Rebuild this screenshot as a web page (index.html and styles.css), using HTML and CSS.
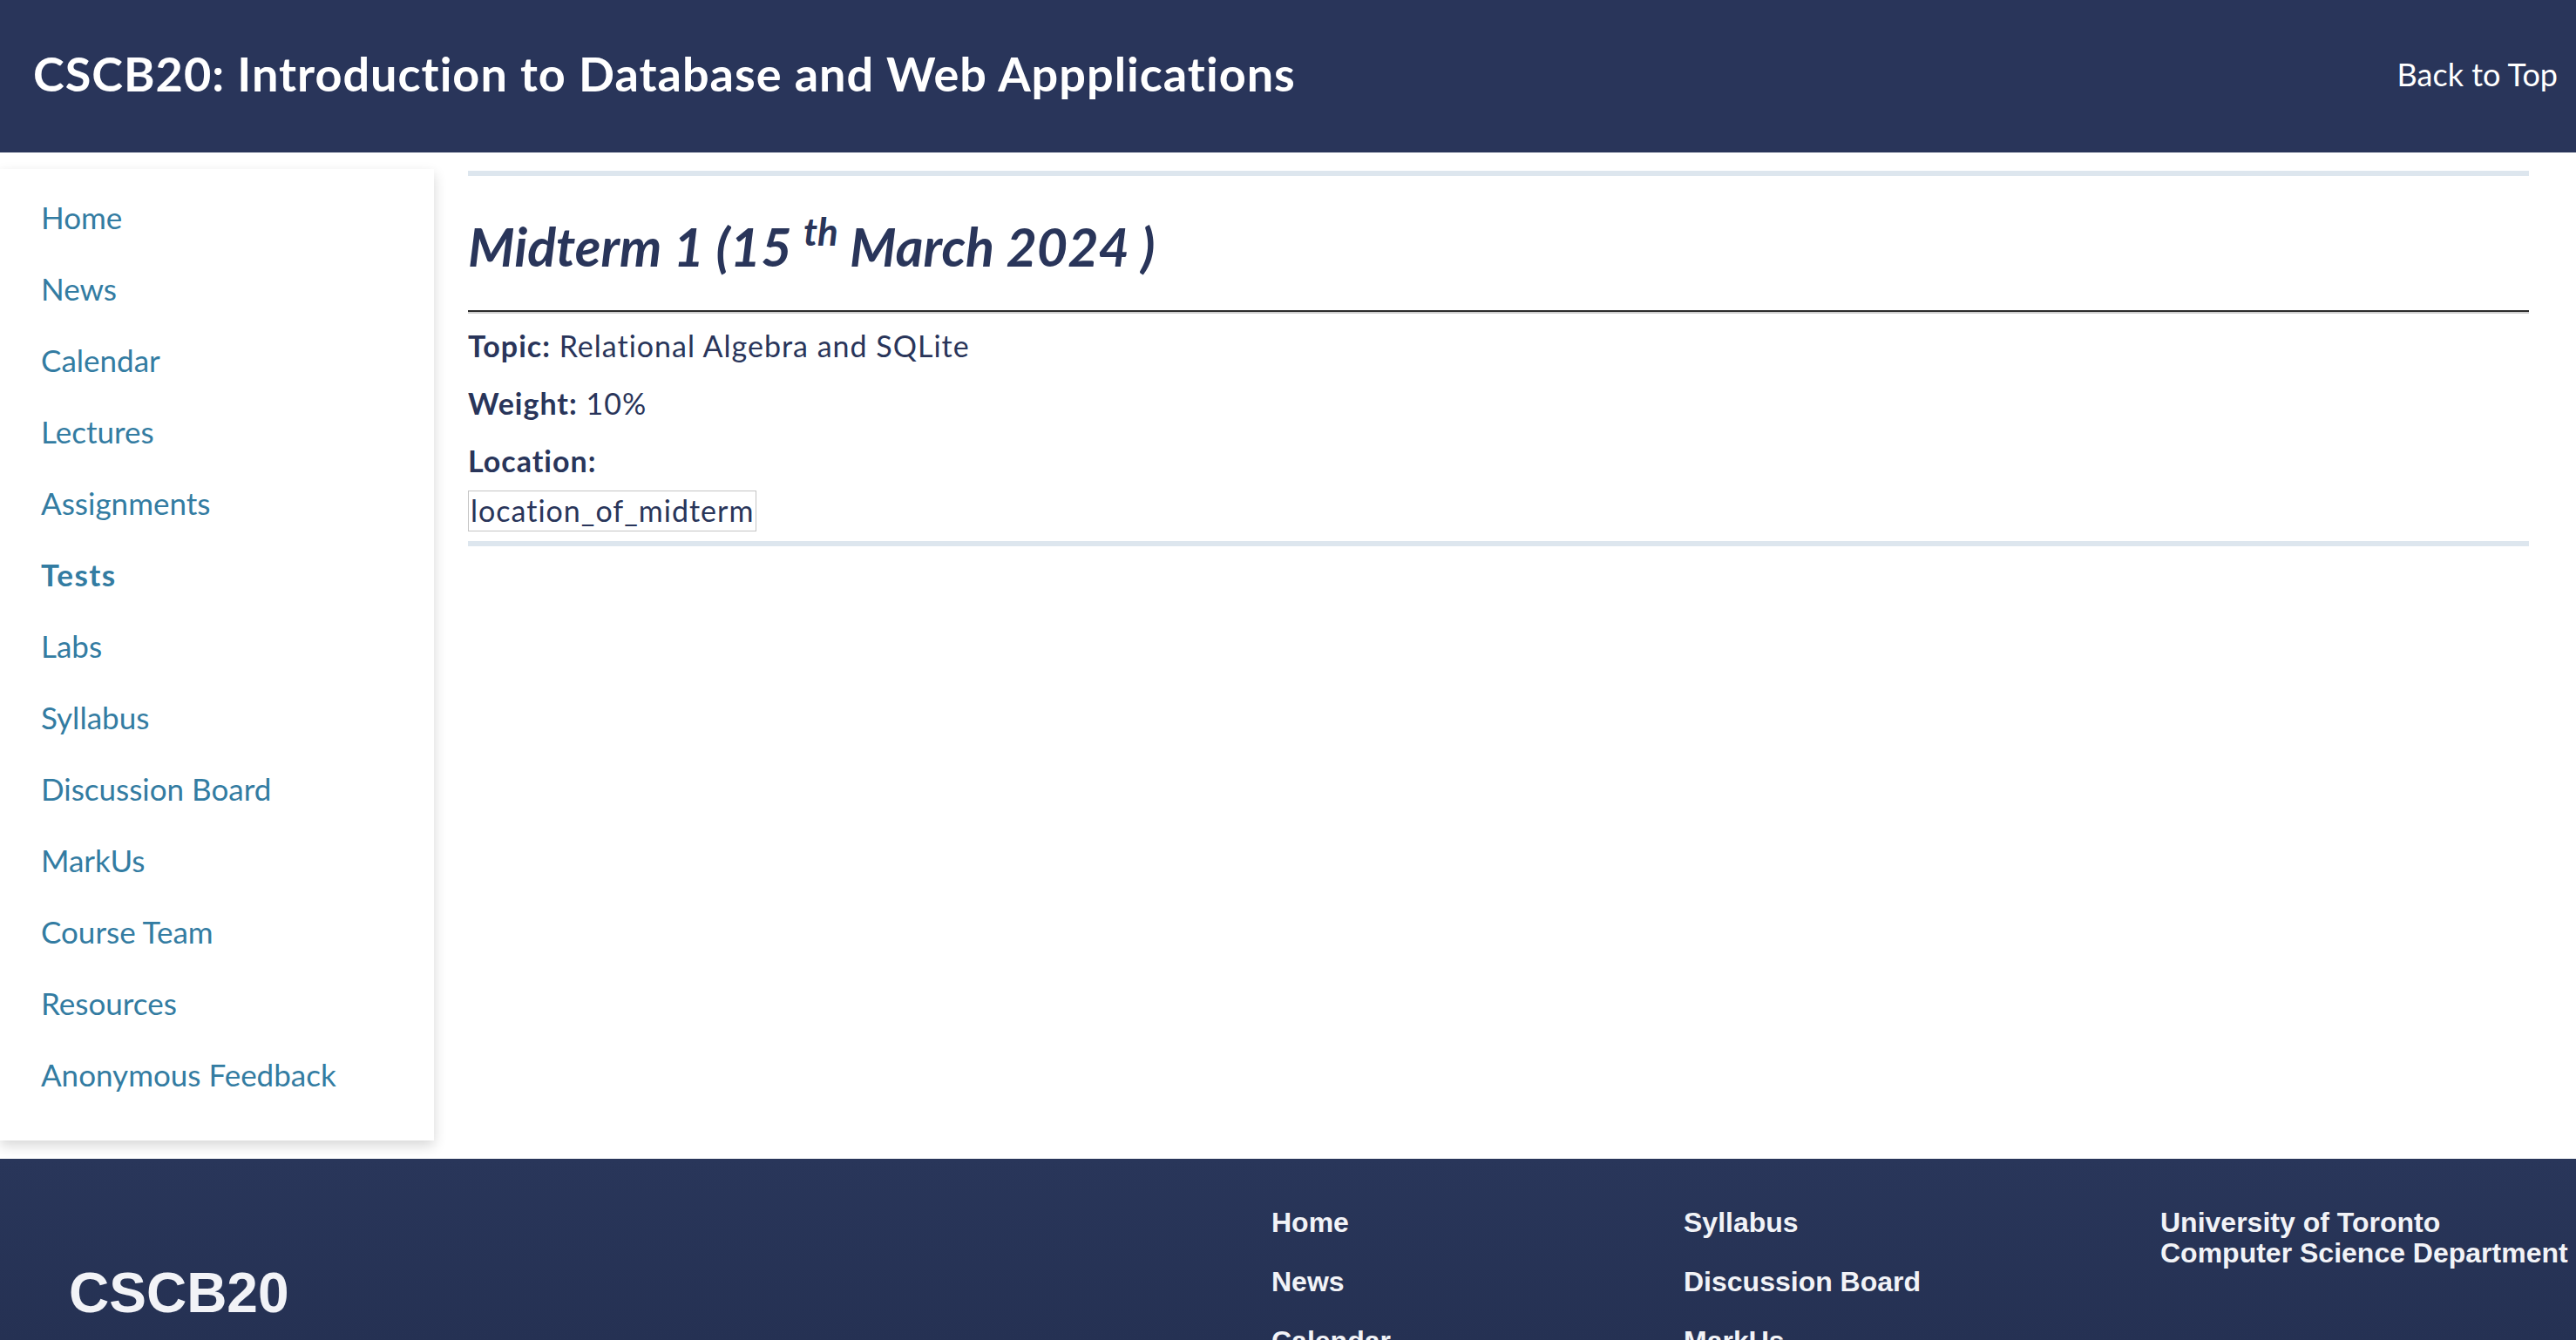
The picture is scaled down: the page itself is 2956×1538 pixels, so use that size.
FILE: index.html
```html
<!DOCTYPE html>
<html lang="en">
<head>
<meta charset="utf-8">
<title>CSCB20 - Tests</title>
<link rel="stylesheet" href="styles.css">
</head>
<body>
<header class="topbar">
  <h1 class="site-title">CSCB20: Introduction to Database and Web Appplications</h1>
  <a class="back-top" href="#">Back to Top</a>
</header>
<div class="layout">
  <nav class="sidebar">
    <ul class="side-list">
      <li><a href="#">Home</a></li>
      <li><a href="#">News</a></li>
      <li><a href="#">Calendar</a></li>
      <li><a href="#">Lectures</a></li>
      <li><a href="#">Assignments</a></li>
      <li><a class="active" href="#">Tests</a></li>
      <li><a href="#">Labs</a></li>
      <li><a href="#">Syllabus</a></li>
      <li><a href="#">Discussion Board</a></li>
      <li><a href="#">MarkUs</a></li>
      <li><a href="#">Course Team</a></li>
      <li><a href="#">Resources</a></li>
      <li><a href="#">Anonymous Feedback</a></li>
    </ul>
  </nav>
  <main class="content">
    <section class="test-card">
      <h2 class="test-title">Midterm 1 (15 <sup>th</sup> March 2024 )</h2>
      <hr class="rule">
      <p class="info"><strong>Topic:</strong> Relational Algebra and SQLite</p>
      <p class="info"><strong>Weight:</strong> 10%</p>
      <p class="info"><strong>Location:</strong></p>
      <p class="loc-row"><span class="loc-box">location_of_midterm</span></p>
    </section>
  </main>
</div>
<footer class="footer">
  <div class="footer-logo">CSCB20</div>
  <ul class="footer-col">
    <li>Home</li>
    <li>News</li>
    <li>Calendar</li>
    <li>Lectures</li>
    <li>Assignments</li>
    <li>Tests</li>
    <li>Labs</li>
  </ul>
  <ul class="footer-col">
    <li>Syllabus</li>
    <li>Discussion Board</li>
    <li>MarkUs</li>
    <li>Course Team</li>
    <li>Resources</li>
    <li>Anonymous Feedback</li>
  </ul>
  <div class="footer-addr">
    <div>University of Toronto</div>
    <div>Computer Science Department</div>
  </div>
</footer>
</body>
</html>
```
FILE: styles.css
```css
html, body {
  margin: 0;
  padding: 0;
  background: #ffffff;
}
body {
  font-family: Lato, "Noto Sans", sans-serif;
  color: #29355a;
}
.topbar {
  height: 175px;
  background: #29355a;
  display: flex;
  align-items: center;
  justify-content: space-between;
  padding: 0 21px 5px 38px;
  box-sizing: border-box;
}
.site-title {
  margin: 0;
  font-size: 54px;
  letter-spacing: 1px;
  font-weight: 700;
  color: #ffffff;
  line-height: 1.2;
}
.back-top {
  color: #ffffff;
  text-decoration: none;
  font-size: 36px;
}
.layout {
  display: flex;
  align-items: flex-start;
  gap: 39px;
  margin-top: 19px;
}
.sidebar {
  width: 498px;
  flex: 0 0 498px;
  background: #ffffff;
  box-shadow: 0 6px 14px rgba(0, 0, 0, 0.16);
  padding: 14px 0 35px 0;
  box-sizing: border-box;
}
.side-list {
  list-style: none;
  margin: 0;
  padding: 0 0 0 47px;
}
.side-list li {
  height: 82px;
  display: flex;
  align-items: center;
}
.side-list a {
  color: #337ca2;
  text-decoration: none;
  font-size: 35px;
}
.side-list a.active {
  font-weight: 700;
  letter-spacing: 1.5px;
}
.content {
  flex: 1;
  margin-right: 54px;
  margin-top: 2px;
}
.test-card {
  border-top: 6px solid #dde6ee;
  border-bottom: 6px solid #dde6ee;
  padding: 44px 0 11px 0;
}
.test-title {
  margin: 0;
  font-size: 61px;
  font-style: italic;
  font-weight: 700;
  line-height: 1.2;
}
.test-title sup {
  font-size: 0.72em;
  vertical-align: 0.55em;
  line-height: 0;
}
.rule {
  margin: 37px 0 17px 0;
  border: 0;
  border-top: 2px solid #2b2b2b;
  border-bottom: 2px solid #d0d0d0;
  height: 0;
}
.info {
  margin: 0 0 26px 0;
  font-size: 34px;
  letter-spacing: 1px;
  line-height: 40px;
}
.info strong {
  font-weight: 700;
}
.loc-row {
  margin: -12px 0 0 0;
  font-size: 34px;
  letter-spacing: 1px;
  line-height: 40px;
}
.loc-box {
  display: inline-block;
  border: 1px solid #c4c4c4;
  padding: 2px 2px 3px 2px;
  color: #29355a;
}
.footer {
  margin-top: 21px;
  background: linear-gradient(#29365a, #212c4c);
  display: grid;
  grid-template-columns: 1380px 473px 547px 1fr;
  padding: 56px 0 60px 79px;
  font-family: "Liberation Sans", Arial, sans-serif;
  font-weight: 700;
  color: #f2f3f7;
  height: 420px;
  box-sizing: border-box;
}
.footer-logo {
  font-size: 64px;
  line-height: 64px;
  margin-top: 66px;
}
.footer-col {
  list-style: none;
  margin: 0;
  padding: 0;
  font-size: 32px;
  line-height: 35px;
}
.footer-col li {
  margin-bottom: 33px;
}
.footer-addr {
  font-size: 32px;
  line-height: 35px;
  white-space: nowrap;
}
```
